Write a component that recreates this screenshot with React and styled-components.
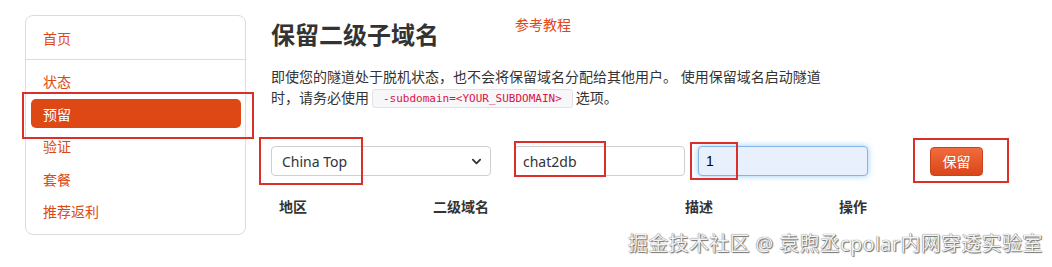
import React from "react";
import styled, { createGlobalStyle } from "styled-components";

const Global = createGlobalStyle`
  html, body { margin: 0; padding: 0; background: #fff; }
  body { font-family: "Open Sans", "Noto Sans CJK SC", sans-serif; color: #333; }
  * { box-sizing: border-box; }
`;

const ORANGE = "#dd4814";
const CJK = `"Noto Sans", "Noto Sans CJK SC", sans-serif`;

const Page = styled.div`
  position: relative;
  width: 1052px;
  height: 267px;
  display: flex;
  align-items: flex-start;
  gap: 25px;
  padding: 15px 0 0 25px;
  overflow: hidden;
`;

const Sidebar = styled.nav`
  width: 221px;
  height: 220px;
  flex: none;
  border: 1px solid #dcdcdc;
  border-radius: 8px;
  padding: 7px 0 5px;
  display: flex;
  flex-direction: column;
`;

const NavItem = styled.a`
  display: flex;
  align-items: center;
  height: 30px;
  margin: 0 4px 3px 5px;
  padding-left: 12px;
  border-radius: 5px;
  font-family: ${CJK};
  font-size: 14px;
  color: ${(p) => (p.$active ? "#fff" : ORANGE)};
  background: ${(p) => (p.$active ? ORANGE : "transparent")};
  text-decoration: none;
`;

const Divider = styled.div`
  height: 1px;
  background: #dcdcdc;
  margin: 3px 0 7px;
`;

const Main = styled.main`
  width: 760px;
  flex: none;
  display: flex;
  flex-direction: column;
`;

const HeaderRow = styled.div`
  display: flex;
  align-items: flex-start;
  height: 40px;
`;

const Title = styled.h1`
  margin: 4px 0 0;
  font-family: ${CJK};
  font-size: 24px;
  font-weight: 700;
  line-height: 32px;
  color: #333;
`;

const Tutorial = styled.a`
  margin: 0 0 0 76px;
  font-family: ${CJK};
  font-size: 14px;
  line-height: 20px;
  color: ${ORANGE};
  text-decoration: none;
`;

const Para = styled.p`
  width: 556px;
  margin: 11px 0 0;
  font-family: ${CJK};
  font-size: 14px;
  line-height: 21px;
  color: #333;
`;

const Code = styled.code`
  display: inline-block;
  padding: 0 10px;
  margin: 0 3px;
  height: 19px;
  line-height: 17px;
  vertical-align: 1px;
  font-family: "DejaVu Sans Mono", monospace;
  font-size: 11px;
  color: #dd1144;
  background: #f7f7f9;
  border: 1px solid #e1e1e8;
  border-radius: 3px;
`;

const FormRow = styled.div`
  display: flex;
  align-items: center;
  margin-top: 38px;
  height: 30px;
  & > * { flex: none; }
`;

const SelectBox = styled.div`
  width: 220px;
  height: 30px;
  border: 1px solid #cfcfcf;
  border-radius: 4px;
  display: flex;
  align-items: center;
  justify-content: space-between;
  padding: 0 8px 0 10px;
  font-family: ${CJK};
  font-size: 14px;
  color: #333;
`;

const TextInput = styled.div`
  width: ${(p) => p.$w}px;
  height: 30px;
  margin-left: ${(p) => p.$ml}px;
  border: 1px solid ${(p) => (p.$focus ? "#86b4e8" : "#cfcfcf")};
  border-radius: 4px;
  background: ${(p) => (p.$focus ? "#e8f0fe" : "#fff")};
  box-shadow: ${(p) => (p.$focus ? "0 0 6px rgba(82,168,236,.6)" : "none")};
  display: flex;
  align-items: center;
  padding-left: ${(p) => (p.$focus ? 7 : 8)}px;
  font-family: ${(p) => (p.$focus ? `"Liberation Sans", sans-serif` : CJK)};
  font-size: 14px;
  color: ${(p) => (p.$focus ? "#000" : "#333")};
`;

const SaveButton = styled.button`
  margin-left: 62px;
  width: 53px;
  height: 29px;
  border: 1px solid #c9441a;
  border-radius: 4px;
  background: linear-gradient(#f26b3c, #d9461a);
  color: #fff;
  font-family: ${CJK};
  font-size: 14px;
  padding: 0;
`;

const Headers = styled.div`
  display: grid;
  grid-template-columns: 154px 252px 154px auto;
  padding-left: 8px;
  margin-top: 20px;
  font-family: ${CJK};
  font-size: 14px;
  font-weight: 700;
  color: #333;
`;

const Mark = styled.div`
  position: absolute;
  border: 2px solid #d9302c;
  left: ${(p) => p.$x}px;
  top: ${(p) => p.$y}px;
  width: ${(p) => p.$w}px;
  height: ${(p) => p.$h}px;
  pointer-events: none;
`;

const Watermark = styled.div`
  position: absolute;
  left: 628px;
  top: 231px;
  font-family: ${CJK};
  font-size: 20px;
  line-height: 26px;
  letter-spacing: 0.3px;
  color: #f3f3f3;
  text-shadow: 0 0 1px #444, 1px 1px 1px #777;
  white-space: nowrap;
`;

const Chevron = () => (
  <svg width="11" height="11" viewBox="0 0 12 12" fill="none">
    <path d="M2 4l4 4 4-4" stroke="#333" strokeWidth="2" strokeLinecap="round" strokeLinejoin="round" />
  </svg>
);

export default function App() {
  return (
    <>
      <Global />
      <Page>
        <Sidebar>
          <NavItem>首页</NavItem>
          <Divider />
          <NavItem>状态</NavItem>
          <NavItem $active>预留</NavItem>
          <NavItem>验证</NavItem>
          <NavItem>套餐</NavItem>
          <NavItem>推荐返利</NavItem>
        </Sidebar>
        <Main>
          <HeaderRow>
            <Title>保留二级子域名</Title>
            <Tutorial>参考教程</Tutorial>
          </HeaderRow>
          <Para>
            即使您的隧道处于脱机状态，也不会将保留域名分配给其他用户。 使用保留域名启动隧道时，请务必使用
            <Code>-subdomain=&lt;YOUR_SUBDOMAIN&gt;</Code>选项。
          </Para>
          <FormRow>
            <SelectBox>
              <span>China Top</span>
              <Chevron />
            </SelectBox>
            <TextInput $w={171} $ml={23}>chat2db</TextInput>
            <TextInput $w={170} $ml={13} $focus>1</TextInput>
            <SaveButton>保留</SaveButton>
          </FormRow>
          <Headers>
            <span>地区</span>
            <span>二级域名</span>
            <span>描述</span>
            <span>操作</span>
          </Headers>
        </Main>
        <Mark $x={22} $y={92} $w={232} $h={47} />
        <Mark $x={259} $y={137} $w={104} $h={48} />
        <Mark $x={514} $y={141} $w={92} $h={36} />
        <Mark $x={690} $y={142} $w={48} $h={38} />
        <Mark $x={913} $y={138} $w={96} $h={45} />
        <Watermark>掘金技术社区 @ 袁煦丞cpolar内网穿透实验室</Watermark>
      </Page>
    </>
  );
}
